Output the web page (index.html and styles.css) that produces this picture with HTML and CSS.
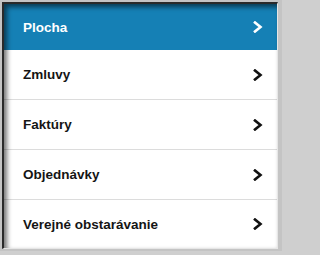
FILE: index.html
```html
<!DOCTYPE html>
<html>
<head>
<meta charset="utf-8">
<link rel="stylesheet" href="styles.css">
</head>
<body>
<div class="frame">
  <nav class="menu">
    <a class="item active"><span>Plocha</span><svg class="chev" viewBox="0 0 10 12"><polyline points="2,1.5 7.5,6 2,10.5"/></svg></a>
    <a class="item"><span>Zmluvy</span><svg class="chev" viewBox="0 0 10 12"><polyline points="2,1.5 7.5,6 2,10.5"/></svg></a>
    <a class="item"><span>Faktúry</span><svg class="chev" viewBox="0 0 10 12"><polyline points="2,1.5 7.5,6 2,10.5"/></svg></a>
    <a class="item"><span>Objednávky</span><svg class="chev" viewBox="0 0 10 12"><polyline points="2,1.5 7.5,6 2,10.5"/></svg></a>
    <a class="item last"><span>Verejné obstarávanie</span><svg class="chev" viewBox="0 0 10 12"><polyline points="2,1.5 7.5,6 2,10.5"/></svg></a>
  </nav>
</div>
</body>
</html>
```

FILE: styles.css
```css
html, body {
  margin: 0;
  padding: 0;
}
body {
  background: #cfcfcf;
  width: 282px;
  height: 255px;
  font-family: "Liberation Sans", Arial, sans-serif;
}
.frame {
  padding: 2px 4px 4px 2px;
  height: 251px;
  box-sizing: border-box;
  background: #c4c4c4;
}
.menu {
  position: relative;
  display: flex;
  flex-direction: column;
  background: #fff;
  border-left: 2px solid #2a2a2a;
  border-top: 2px solid #2a2a2a;
  border-right: 1px solid #e6e6e6;
  border-bottom: 1px solid #e6e6e6;
  height: 247px;
  box-sizing: border-box;
}
.menu::after {
  content: "";
  position: absolute;
  inset: 0;
  pointer-events: none;
  box-shadow: inset 3px 3px 5px rgba(0, 0, 0, 0.55);
}
.item {
  display: flex;
  align-items: center;
  justify-content: space-between;
  height: 50px;
  padding: 0 14px 0 19px;
  border-bottom: 1px solid #dcdcdc;
  color: #151515;
  font-weight: bold;
  font-size: 13.5px;
  box-sizing: border-box;
}
.item.active {
  height: 46px;
  background: #1580b5;
  color: #fff;
  border-bottom: none;
}
.item.last {
  border-bottom: none;
  flex: 1;
}
.chev {
  width: 10px;
  height: 12px;
}
.chev polyline {
  fill: none;
  stroke: #111;
  stroke-width: 2.6;
  stroke-linecap: square;
}
.active .chev polyline {
  stroke: #fff;
}
```
